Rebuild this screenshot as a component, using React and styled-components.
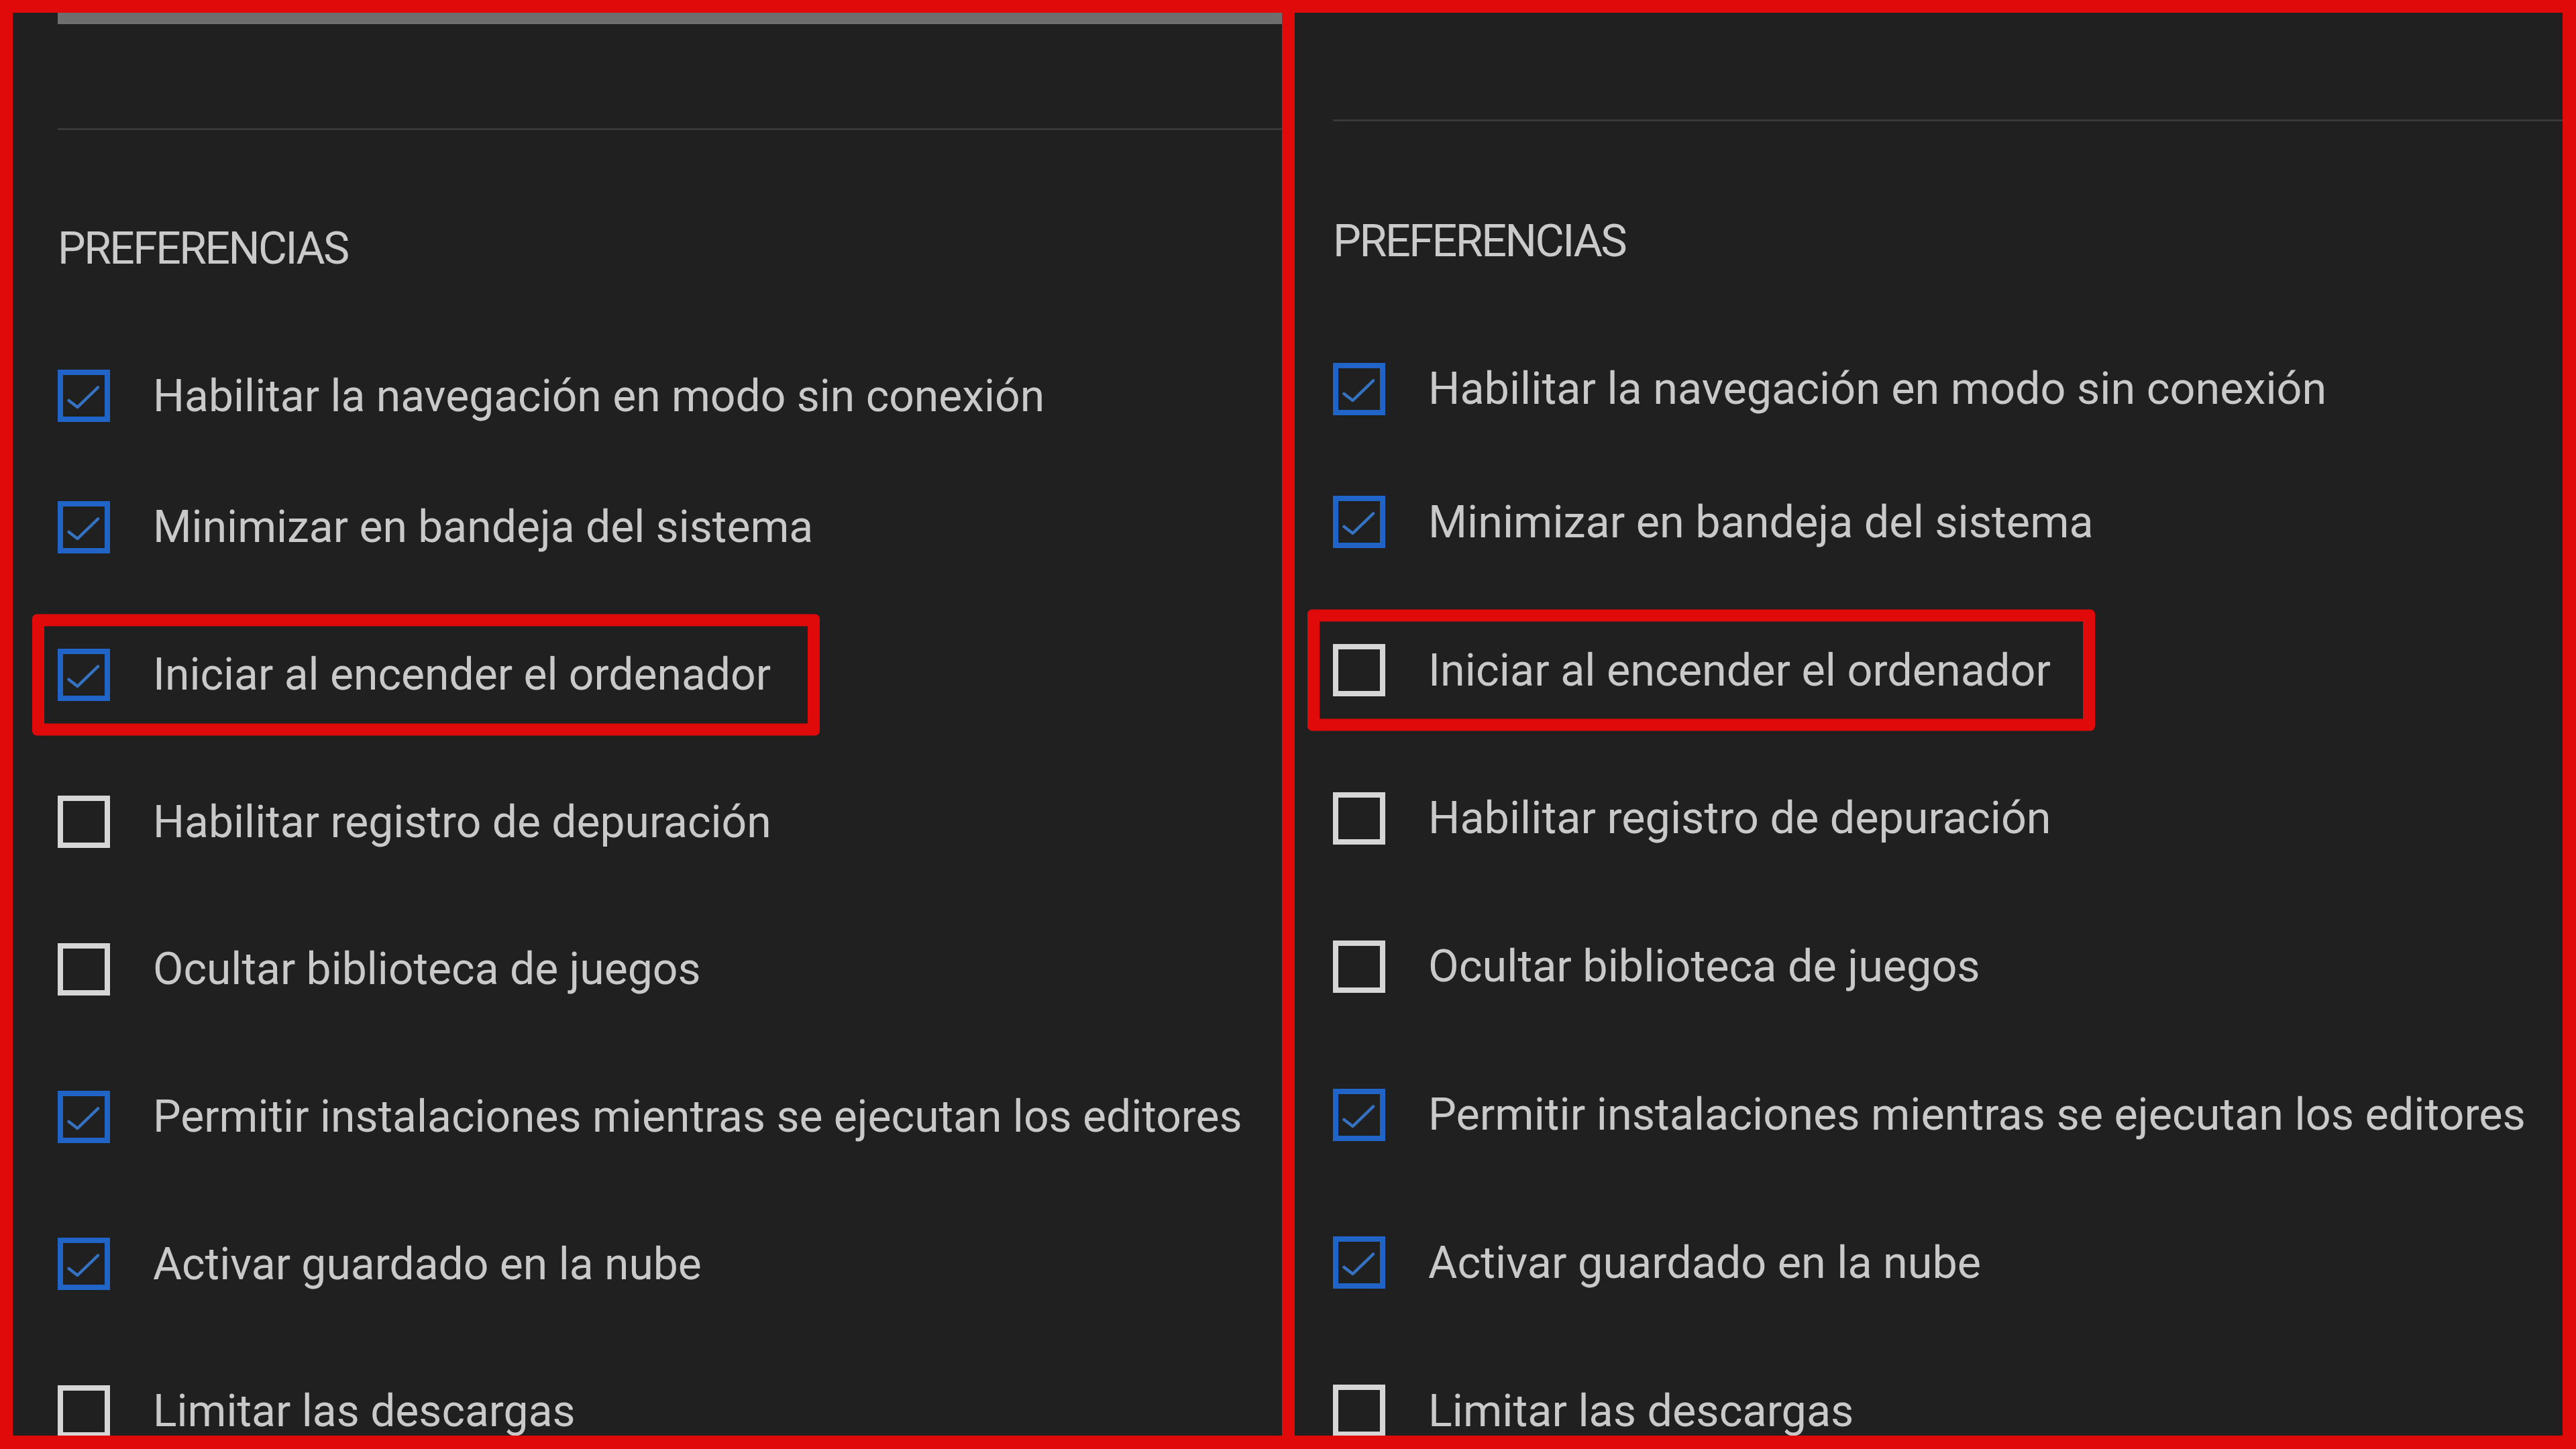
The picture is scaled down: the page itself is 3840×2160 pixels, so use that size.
import styled, { createGlobalStyle } from 'styled-components';

const GlobalStyle = createGlobalStyle`
  html, body {
    margin: 0;
    padding: 0;
    background: #e10a0a;
  }
  * {
    box-sizing: border-box;
  }
`;

const Frame = styled.div`
  width: 3840px;
  height: 2160px;
  padding: 19px 20px 20px 19px;
  background: #e10a0a;
  display: grid;
  grid-template-columns: 1892px 1890px;
  column-gap: 19px;
  font-family: Roboto, 'Noto Sans', sans-serif;
`;

const Panel = styled.section`
  background: #202020;
  padding-left: ${(p) => p.$padLeft}px;
  display: flex;
  flex-direction: column;
  overflow: hidden;
  font-size: ${(p) => p.$fontSize}px;
`;

const TopBar = styled.div`
  height: 17px;
  background: #6e6e6e;
  flex-shrink: 0;
`;

const Rule = styled.hr`
  margin: ${(p) => p.$top}px 0 0;
  border: none;
  height: 3px;
  background: #393939;
  flex-shrink: 0;
`;

const Heading = styled.h2`
  margin: ${(p) => p.$top}px 0 0;
  font-size: 1em;
  line-height: 65px;
  font-weight: 400;
  letter-spacing: -2.5px;
  color: #cacaca;
  text-transform: uppercase;
`;

const List = styled.ul`
  list-style: none;
  margin: ${(p) => p.$top}px 0 0;
  padding: 0;
  display: flex;
  flex-direction: column;
`;

const Row = styled.li`
  position: relative;
  display: flex;
  align-items: center;
  gap: 64px;
  height: ${(p) => p.$step}px;
  flex-shrink: 0;

  &:first-child {
    height: ${(p) => p.$first}px;
  }
`;

const Label = styled.span`
  line-height: 65px;
  color: #c9c9c9;
  white-space: nowrap;
`;

const Highlight = styled.div`
  position: absolute;
  left: -38px;
  top: 50%;
  transform: translateY(-50%);
  width: 1174px;
  height: 181px;
  border: 18px solid #e10a0a;
  border-radius: 7px;
  pointer-events: none;
`;

const Box = ({ checked }) => (
  <svg width="78" height="78" viewBox="0 0 78 78" style={{ flexShrink: 0 }}>
    <rect
      x="4"
      y="4"
      width="70"
      height="70"
      fill="none"
      stroke={checked ? '#1f64c6' : '#d6d6d6'}
      strokeWidth="8"
    />
    {checked && (
      <polyline
        points="16.5,46 29.5,56 60,26.5"
        fill="none"
        stroke="#3573c2"
        strokeWidth="4.5"
        strokeLinecap="round"
        strokeLinejoin="round"
      />
    )}
  </svg>
);

const options = [
  'Habilitar la navegación en modo sin conexión',
  'Minimizar en bandeja del sistema',
  'Iniciar al encender el ordenador',
  'Habilitar registro de depuración',
  'Ocultar biblioteca de juegos',
  'Permitir instalaciones mientras se ejecutan los editores',
  'Activar guardado en la nube',
  'Limitar las descargas',
];

const panels = [
  {
    id: 'before',
    bar: true,
    padLeft: 67,
    fontSize: 66,
    ruleTop: 155,
    headTop: 144,
    listTop: 101,
    first: 172,
    step: 219.7,
    checked: [true, true, true, false, false, true, true, false],
  },
  {
    id: 'after',
    bar: false,
    padLeft: 57,
    fontSize: 66.5,
    ruleTop: 159,
    headTop: 146,
    listTop: 99,
    first: 177,
    step: 220.8,
    checked: [true, true, false, false, false, true, true, false],
  },
];

const MARKED = 2;

const SettingsPanel = ({ panel }) => (
  <Panel $padLeft={panel.padLeft} $fontSize={panel.fontSize}>
    {panel.bar && <TopBar />}
    <Rule $top={panel.ruleTop} />
    <Heading $top={panel.headTop}>Preferencias</Heading>
    <List $top={panel.listTop}>
      {options.map((text, i) => (
        <Row key={text} $first={panel.first} $step={panel.step}>
          <Box checked={panel.checked[i]} />
          <Label>{text}</Label>
          {i === MARKED && <Highlight />}
        </Row>
      ))}
    </List>
  </Panel>
);

export default function App() {
  return (
    <>
      <GlobalStyle />
      <Frame>
        {panels.map((p) => (
          <SettingsPanel key={p.id} panel={p} />
        ))}
      </Frame>
    </>
  );
}
